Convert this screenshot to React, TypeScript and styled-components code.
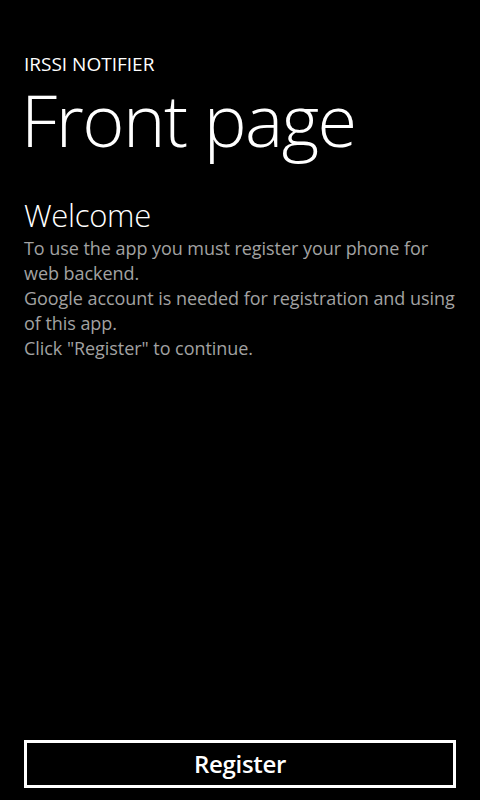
import React from "react";
import styled, { createGlobalStyle } from "styled-components";

const Global = createGlobalStyle`
  html, body { margin: 0; padding: 0; background: #000; }
  body { font-family: "Open Sans", "Noto Sans", sans-serif; color: #fff; }
`;

const Page = styled.div`
  width: 480px;
  height: 800px;
  display: flex;
  flex-direction: column;
  background: #000;
  box-sizing: border-box;
  padding: 0 24px 12px 24px;
`;

const AppTitle = styled.div`
  margin-top: 54px;
  font-size: 19px;
  line-height: 20px;
  font-weight: 400;
`;

const PageTitle = styled.h1`
  margin: 5px 0 0 -3px;
  font-size: 72px;
  font-weight: 300;
  line-height: 80px;
  letter-spacing: -1.5px;
`;

const Content = styled.div`
  flex: 1;
  padding-top: 38px;
`;

const Heading = styled.h2`
  margin: 0;
  font-size: 31px;
  font-weight: 300;
  line-height: 36px;
  letter-spacing: -0.3px;
`;

const Body = styled.p`
  margin: 3px 0 0 0;
  color: #a2a2a2;
  font-size: 18px;
  line-height: 25px;
  letter-spacing: -0.05px;
`;

const Button = styled.button`
  box-sizing: border-box;
  width: 432px;
  height: 48px;
  background: #000;
  border: 3px solid #fff;
  color: #fff;
  font-family: "Open Sans", "Noto Sans", sans-serif;
  font-size: 24px;
  font-weight: 600;
  letter-spacing: -0.3px;
  padding: 0 0 2px 0;
`;

export default function App() {
  return (
    <>
      <Global />
      <Page>
        <AppTitle>IRSSI NOTIFIER</AppTitle>
        <PageTitle>Front page</PageTitle>
        <Content>
          <Heading>Welcome</Heading>
          <Body>
            To use the app you must register your phone for web backend.
            <br />
            Google account is needed for registration and using of this app.
            <br />
            Click "Register" to continue.
          </Body>
        </Content>
        <Button>Register</Button>
      </Page>
    </>
  );
}
